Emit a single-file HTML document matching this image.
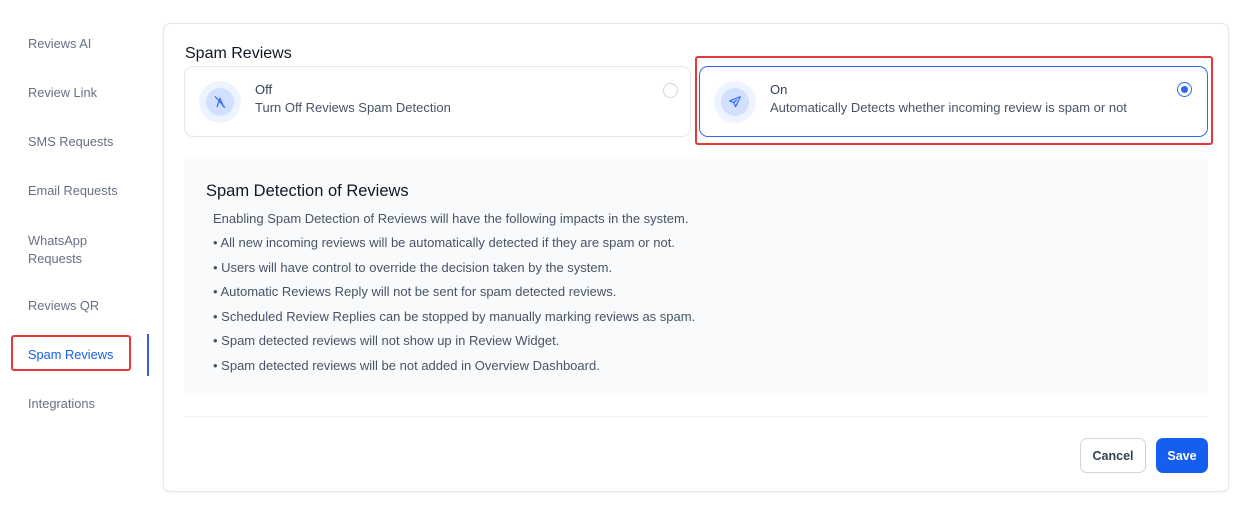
<!DOCTYPE html>
<html><head><meta charset="utf-8"><style>
*{box-sizing:border-box;margin:0;padding:0}
body{width:1241px;height:515px;background:#fff;font-family:"Liberation Sans",sans-serif;position:relative;overflow:hidden;color:#101828}
.nav{position:absolute;left:28px;font-size:12.8px;color:#667085}
.card{position:absolute;left:163px;top:23px;width:1066px;height:469px;border:1px solid #e4e7ec;border-radius:7px;box-shadow:0 1px 2px rgba(16,24,40,.05)}
.opt{position:absolute;top:66px;height:71px;border:1px solid #e4e7ec;border-radius:9px;background:#fff}
.ic{position:absolute;left:14px;top:14px;width:42px;height:42px;border-radius:50%;background:#eef4ff}
.ic div{position:absolute;left:7px;top:7px;width:28px;height:28px;border-radius:50%;background:#d1e0ff;display:flex;align-items:center;justify-content:center}
.t1{position:absolute;left:70px;top:15px;font-size:13px;color:#344054}
.t2{position:absolute;left:70px;top:33px;font-size:13px;color:#475467}
.radio{position:absolute;top:16px;width:15px;height:15px;border-radius:50%;border:1px solid #d0d5dd}
.info{position:absolute;left:184px;top:157px;width:1024px;height:238px;background:#f9fafb;border-radius:4px}
.ln{position:absolute;left:29px;font-size:13px;color:#475467}
</style></head><body>
<div class="nav" style="top:36px">Reviews AI</div>
<div class="nav" style="top:85px">Review Link</div>
<div class="nav" style="top:134px">SMS Requests</div>
<div class="nav" style="top:183px">Email Requests</div>
<div class="nav" style="top:232px;line-height:18px">WhatsApp<br>Requests</div>
<div class="nav" style="top:298px">Reviews QR</div>
<div class="nav" style="top:347px;color:#155eef">Spam Reviews</div>
<div class="nav" style="top:396px">Integrations</div>
<div style="position:absolute;left:11px;top:335px;width:120px;height:36px;border:2.5px solid #e5383b;border-radius:3px"></div>
<div style="position:absolute;left:147px;top:334px;width:2px;height:42px;background:#3b5bdb"></div>
<div class="card"></div>
<div style="position:absolute;left:185px;top:45px;font-size:16px;color:#101828">Spam Reviews</div>
<div class="opt" style="left:184px;width:507px">
<div class="ic"><div><svg width="14" height="14" viewBox="0 0 24 24" fill="none" stroke="#2e67f0" stroke-width="2" stroke-linecap="round"><path d="M4 3l16 18M7 20l5-14 6 14"/></svg></div></div>
<div class="t1">Off</div><div class="t2">Turn Off Reviews Spam Detection</div>
<div class="radio" style="left:478px;top:16px"></div></div>
<div style="position:absolute;left:695px;top:56px;width:518px;height:89px;border:2.5px solid #e5383b;border-radius:3px"></div>
<div class="opt" style="left:699px;width:509px;border:1.5px solid #2e67f0">
<div class="ic"><div><svg width="14" height="14" viewBox="0 0 24 24" fill="none" stroke="#2e67f0" stroke-width="2" stroke-linejoin="round"><path d="M21 3L3 10l7 3 3 7z M10 13l5-5"/></svg></div></div>
<div class="t1">On</div><div class="t2">Automatically Detects whether incoming review is spam or not</div>
<div class="radio" style="left:477px;top:15px;border:1.5px solid #2e67f0;display:flex;align-items:center;justify-content:center"><div style="width:7px;height:7px;border-radius:50%;background:#2e67f0"></div></div></div>
<div class="info">
<div style="position:absolute;left:22px;top:25px;font-size:16.5px;color:#101828">Spam Detection of Reviews</div>
<div class="ln" style="top:54px">Enabling Spam Detection of Reviews will have the following impacts in the system.</div>
<div class="ln" style="top:78px">• All new incoming reviews will be automatically detected if they are spam or not.</div>
<div class="ln" style="top:103px">• Users will have control to override the decision taken by the system.</div>
<div class="ln" style="top:127px">• Automatic Reviews Reply will not be sent for spam detected reviews.</div>
<div class="ln" style="top:152px">• Scheduled Review Replies can be stopped by manually marking reviews as spam.</div>
<div class="ln" style="top:176px">• Spam detected reviews will not show up in Review Widget.</div>
<div class="ln" style="top:201px">• Spam detected reviews will be not added in Overview Dashboard.</div>
</div>
<div style="position:absolute;left:184px;top:416px;width:1024px;height:1px;background:#f0f1f3"></div>
<div style="position:absolute;left:1080px;top:438px;width:66px;height:35px;border:1px solid #d0d5dd;border-radius:7px;font-size:12.5px;font-weight:bold;color:#344054;display:flex;align-items:center;justify-content:center">Cancel</div>
<div style="position:absolute;left:1156px;top:438px;width:52px;height:35px;background:#155eef;border-radius:7px;font-size:12.5px;font-weight:bold;color:#fff;display:flex;align-items:center;justify-content:center">Save</div>
</body></html>
